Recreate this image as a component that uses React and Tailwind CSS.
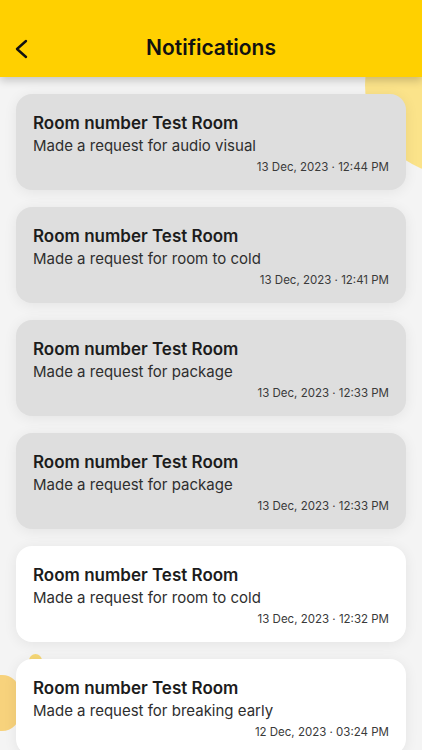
const items = [
  { text: "audio visual", time: "13 Dec, 2023 · 12:44 PM", read: false },
  { text: "room to cold", time: "13 Dec, 2023 · 12:41 PM", read: false },
  { text: "package", time: "13 Dec, 2023 · 12:33 PM", read: false },
  { text: "package", time: "13 Dec, 2023 · 12:33 PM", read: false },
  { text: "room to cold", time: "13 Dec, 2023 · 12:32 PM", read: true },
  { text: "breaking early", time: "12 Dec, 2023 · 03:24 PM", read: true },
];

export default function App() {
  return (
    <div
      className="relative h-[750px] w-[422px] overflow-hidden bg-[#f4f4f4]"
      style={{ fontFamily: "Inter, 'Noto Sans', sans-serif" }}
    >
      {/* decorative blobs */}
      <div className="absolute left-[365px] top-[-5px] h-[180px] w-[180px] rounded-full bg-[#fbe38a]" />
      <div className="absolute left-[-20px] top-[675px] h-[56px] w-[40px] rounded-[18px] bg-[#f7d27c]" />
      <div className="absolute left-[29px] top-[654px] h-[13px] w-[13px] rounded-full bg-[#f5d776]" />

      <header className="relative z-10 flex h-[77px] items-end bg-[#ffd000] pb-[14px] shadow-[0_4px_8px_rgba(0,0,0,0.18)]">
        <button className="absolute left-[14px] top-[39px] text-[#111]">
          <svg width="16" height="20" viewBox="0 0 16 20" fill="none">
            <path d="M12 2 L3 10 L12 18" stroke="currentColor" strokeWidth="2.4" strokeLinecap="round" strokeLinejoin="round" />
          </svg>
        </button>
        <h1 className="w-full text-center text-[21px] font-semibold text-[#111]">Notifications</h1>
      </header>

      <div className="relative z-0 flex flex-col gap-[17px] px-[16px] pt-[17px]">
        {items.map((it, i) => (
          <div
            key={i}
            className={`flex h-[96px] flex-col rounded-[16px] px-[17px] pt-[18px] shadow-[0_2px_14px_rgba(0,0,0,0.07)] ${it.read ? "bg-white" : "bg-[#dedede]"}`}
          >
            <div className="text-[17px] font-semibold leading-[22px] text-[#1c1c1c]">Room number Test Room</div>
            <div className="mt-[1px] text-[15px] leading-[22px] text-[#2e2e2e]">Made a request for {it.text}</div>
            <div className="mt-[2px] text-right text-[11.5px] leading-[16px] text-[#3a3a3a]">{it.time}</div>
          </div>
        ))}
      </div>
    </div>
  );
}
